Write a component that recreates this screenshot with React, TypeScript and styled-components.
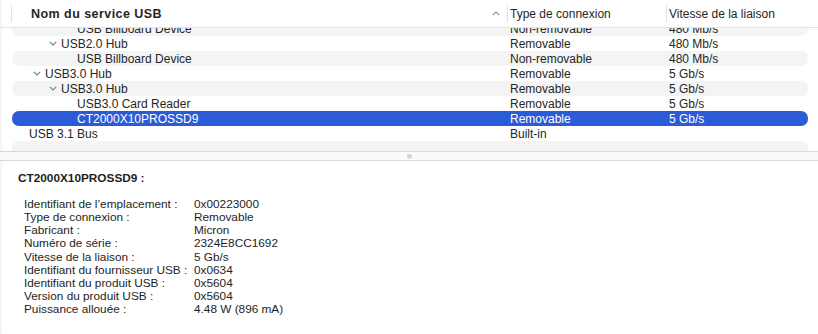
import React from "react";
import styled, { createGlobalStyle } from "styled-components";

const GlobalStyle = createGlobalStyle`
  html, body { margin: 0; padding: 0; background: #ffffff; }
  body { font-family: "Liberation Sans", Arial, sans-serif; color: #262626; }
`;

const Window = styled.div`
  width: 818px;
  height: 334px;
  display: flex;
  flex-direction: column;
  background: #ffffff;
  overflow: hidden;
  box-shadow: inset 3px 0 3px -2px rgba(0, 0, 0, 0.08);
`;

const Header = styled.div`
  height: 27px;
  flex: none;
  display: grid;
  grid-template-columns: 496px 159px 1fr;
  align-items: center;
  padding-left: 11px;
  border-bottom: 1px solid #e3e3e3;
`;

const HeaderCell = styled.div<{ $sorted?: boolean }>`
  height: 17px;
  display: flex;
  align-items: center;
  justify-content: space-between;
  border-left: 1px solid #e2e2e2;
  padding-left: ${(p) => (p.$sorted ? "19px" : "2px")};
  padding-right: 7px;
  font-size: ${(p) => (p.$sorted ? "12.5px" : "12px")};
  font-weight: ${(p) => (p.$sorted ? 700 : 400)};
  letter-spacing: ${(p) => (p.$sorted ? "0.45px" : "0")};
  color: #262626;
  white-space: nowrap;
`;

const SortArrow = styled.svg`
  width: 8px;
  height: 5px;
  flex: none;
`;

const RowsViewport = styled.div`
  height: 123px;
  flex: none;
  overflow: hidden;
  padding: 0 10px 0 12px;
`;

const RowsList = styled.div`
  margin-top: -7px;
  display: flex;
  flex-direction: column;
`;

const Row = styled.div<{ $striped: boolean; $selected: boolean }>`
  height: 15px;
  flex: none;
  display: grid;
  grid-template-columns: 498px 159px 1fr;
  align-items: center;
  border-radius: 7px;
  font-size: 12px;
  line-height: 14px;
  white-space: nowrap;
  background: ${(p) => (p.$selected ? "#2c5bd7" : p.$striped ? "#f4f4f4" : "transparent")};
  color: ${(p) => (p.$selected ? "#ffffff" : "#262626")};
`;

const NameCell = styled.div<{ $level: number }>`
  display: flex;
  align-items: center;
  padding-left: ${(p) => 17 + p.$level * 16}px;
`;

const Chevron = styled.svg`
  width: 8px;
  height: 5px;
  margin-left: -12px;
  margin-right: 4px;
  flex: none;
`;

const Cell = styled.div``;

const Splitter = styled.div`
  height: 8px;
  flex: none;
  border-top: 1px solid #d9d9d9;
  border-bottom: 1px solid #d9d9d9;
  background: #fafafa;
  display: flex;
  align-items: center;
  justify-content: center;
`;

const Grip = styled.div`
  width: 5px;
  height: 5px;
  border-radius: 50%;
  background: #d6d6d6;
  margin-left: 1px;
`;

const Detail = styled.div`
  flex: 1;
  padding: 11px 0 0 18px;
  font-size: 11.8px;
  color: #1e1e1e;
`;

const DetailTitle = styled.div`
  font-weight: 700;
  line-height: 13px;
  margin-bottom: 13px;
`;

const PropGrid = styled.div`
  display: grid;
  grid-template-columns: 170px 1fr;
  padding-left: 6px;
  line-height: 13.125px;
  white-space: nowrap;
`;

type RowData = {
  level: number;
  name: string;
  type: string;
  speed: string;
  expanded?: boolean;
  selected?: boolean;
};

const rows: RowData[] = [
  { level: 2, name: "USB Billboard Device", type: "Non-removable", speed: "480 Mb/s" },
  { level: 1, name: "USB2.0 Hub", type: "Removable", speed: "480 Mb/s", expanded: true },
  { level: 2, name: "USB Billboard Device", type: "Non-removable", speed: "480 Mb/s" },
  { level: 0, name: "USB3.0 Hub", type: "Removable", speed: "5 Gb/s", expanded: true },
  { level: 1, name: "USB3.0 Hub", type: "Removable", speed: "5 Gb/s", expanded: true },
  { level: 2, name: "USB3.0 Card Reader", type: "Removable", speed: "5 Gb/s" },
  { level: 2, name: "CT2000X10PROSSD9", type: "Removable", speed: "5 Gb/s", selected: true },
  { level: -1, name: "USB 3.1 Bus", type: "Built-in", speed: "" },
  { level: -1, name: "", type: "", speed: "" },
];

const props: [string, string][] = [
  ["Identifiant de l\u2019emplacement :", "0x00223000"],
  ["Type de connexion :", "Removable"],
  ["Fabricant :", "Micron"],
  ["Numéro de série :", "2324E8CC1692"],
  ["Vitesse de la liaison :", "5 Gb/s"],
  ["Identifiant du fournisseur USB :", "0x0634"],
  ["Identifiant du produit USB :", "0x5604"],
  ["Version du produit USB :", "0x5604"],
  ["Puissance allouée :", "4.48 W (896 mA)"],
];

export default function App() {
  return (
    <>
      <GlobalStyle />
      <Window>
        <Header>
          <HeaderCell $sorted>
            <span>Nom du service USB</span>
            <SortArrow viewBox="0 0 8 5">
              <polyline points="0.8,4.2 4,1 7.2,4.2" fill="none" stroke="#9a9a9a" strokeWidth="1.1" />
            </SortArrow>
          </HeaderCell>
          <HeaderCell>Type de connexion</HeaderCell>
          <HeaderCell>Vitesse de la liaison</HeaderCell>
        </Header>
        <RowsViewport>
          <RowsList>
            {rows.map((r, i) => (
              <Row key={i} $striped={i % 2 === 0} $selected={!!r.selected}>
                <NameCell $level={r.level + 1}>
                  {r.expanded && (
                    <Chevron viewBox="0 0 8 5">
                      <polyline points="0.8,0.8 4,4 7.2,0.8" fill="none" stroke="#7a7a7a" strokeWidth="1.1" />
                    </Chevron>
                  )}
                  {r.name}
                </NameCell>
                <Cell>{r.type}</Cell>
                <Cell>{r.speed}</Cell>
              </Row>
            ))}
          </RowsList>
        </RowsViewport>
        <Splitter>
          <Grip />
        </Splitter>
        <Detail>
          <DetailTitle>CT2000X10PROSSD9 :</DetailTitle>
          <PropGrid>
            {props.map(([k, v]) => (
              <React.Fragment key={k}>
                <span>{k}</span>
                <span>{v}</span>
              </React.Fragment>
            ))}
          </PropGrid>
        </Detail>
      </Window>
    </>
  );
}
